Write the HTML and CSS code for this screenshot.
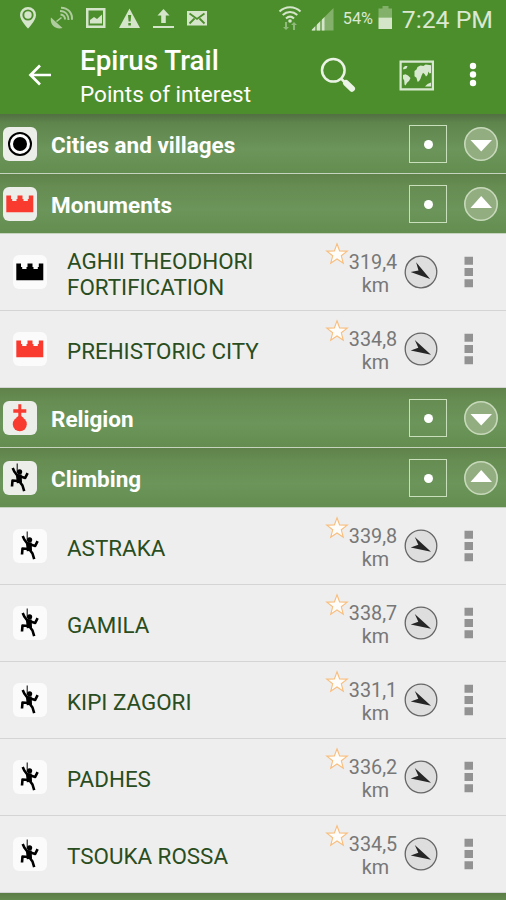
FILE: index.html
```html
<!DOCTYPE html>
<html lang="en">
<head>
  <meta charset="UTF-8">
  <title>Epirus Trail</title>
  <meta name="viewport" content="width=device-width, initial-scale=1.0">
  <link rel="stylesheet" href="styles.css">
</head>
<body>
  <svg class="defs">
    <symbol id="castle" viewBox="0 0 34 34">
      <path d="M3.300 8.500h4.700v3.500h1.200v2h4.300v-2h1V8.500h5V12h1v2h4.300v-2h1V8.500h4.500v16.700H3.300z"/>
    </symbol>
    <symbol id="climber" viewBox="0 0 34 34">
      <path class="rope" d="M14.200 2.500v9"/>
      <circle cx="16.600" cy="10.800" r="2.600"/>
      <path d="M12.800 12.800l5.900.7.300 8.200-5.200.5z"/>
      <path class="limb" d="M9.700 7l1.600 3.500 3.400 4.500M17.500 15.500l4.700 1.400 2.400-4.700M15.500 20l-6-.5-.5 6M16.500 20.500l3 4 1.700 5.700"/>
    </symbol>
    <symbol id="orb" viewBox="0 0 34 34">
      <path d="M15.300 3.300h3v5h5v3.400h-5v3.300l3 2.500h-9l3-2.500v-3.300h-5V8.300h5z"/>
      <circle cx="16.800" cy="23.200" r="7"/>
    </symbol>
    <symbol id="town" viewBox="0 0 34 34">
      <circle cx="17" cy="17" r="11" fill="#fff" stroke="#000" stroke-width="2"/>
      <circle cx="17" cy="17" r="7"/>
    </symbol>
    <symbol id="open" viewBox="0 0 36 36">
      <circle cx="18" cy="18" r="16.200" fill="#92ad80" stroke="#c7d9ba" stroke-width="1.600"/>
      <path d="M7.500 14h21.500L18.200 25.500z" fill="#fff"/>
    </symbol>
    <symbol id="close" viewBox="0 0 36 36">
      <circle cx="18" cy="18" r="16.200" fill="#92ad80" stroke="#c7d9ba" stroke-width="1.600"/>
      <path d="M7.500 22h21.500L18.200 10z" fill="#fff"/>
    </symbol>
    <symbol id="star" viewBox="0 0 24 24">
      <path d="M12 1.800l2.600 7.100 7.700.2-6 4.700 2 7.500-6.300-4.300-6.300 4.300 2-7.500-6-4.700 7.700-.2z" fill="#fffdfa" stroke="#f8bd7c" stroke-width="1.100"/>
    </symbol>
    <symbol id="compass" viewBox="0 0 34 34">
      <circle cx="17" cy="17" r="15.800" fill="#dedede" stroke="#666" stroke-width="1.300"/>
      <path d="M10.800 8L27 22.700 6.700 18.500l7.600-2.700z" fill="#262626"/>
    </symbol>
    <symbol id="more" viewBox="0 0 10 32">
      <path d="M.5.700h8.500v8H.5zM.5 12h8.500v8H.5zM.5 23.300h8.500v8H.5z" fill="#929292"/>
    </symbol>
  </svg>

  <header class="header">
    <div class="status">
      <svg class="notifications" viewBox="0 0 190 24">
        <path fill-rule="evenodd" d="M8 1a8 8 0 0 0-8 8c0 5.500 8 13.500 8 13.500S16 14.500 16 9a8 8 0 0 0-8-8zM8 3.400a5.600 5.600 0 1 1 0 11.200A5.600 5.600 0 0 1 8 3.400z"/>
        <circle cx="8" cy="9" r="3.700"/>
        <g opacity=".72">
          <path d="M31 11.500c-1.500 7 4.500 12.500 11.500 10.500zM37 16l5-4-1-1-5 4z"/>
          <path class="wave" d="M40.500 8.500c3 .2 4.700 2.500 4.500 5M40 5c5.500 0 8.500 4 8.500 9M41 1.700c7 0 11.500 5.300 11 12"/>
        </g>
        <path fill-rule="evenodd" d="M66 2h19.500v20H66zM68.500 4.500v15H83v-15z"/>
        <path d="M70 17.500v-3.500l4-3 3 2 5-4.500v9z"/>
        <path fill-rule="evenodd" d="M109.500 2.500L120 22H99zM108 9l.6 6.500h2l.6-6.500zM108.300 17v2.600h2.600V17z"/>
        <path d="M143.500 3l6 6.500h-3.700V17h-4.600V9.500h-3.700zM133 20h21v2h-21z"/>
        <path fill-rule="evenodd" d="M167 5h20v14.500h-20z"/>
        <path class="flap" d="M169.500 7.500l7.500 5.500 7.500-5.500M169.500 17.500l5-5M184.500 17.500l-5-5"/>
      </svg>
      <div class="indicators">
        <svg class="wifi" viewBox="0 0 24 26">
          <path class="wave" d="M1.500 6.500c6-5.700 15-5.700 21 0M4.700 10c4.300-4 10.300-4 14.600 0M8 13.500c2.500-2.300 5.500-2.300 8 0"/>
          <circle cx="12" cy="16" r="1.800"/>
          <path opacity=".5" d="M7 17h2v5h2l-3 3-3-3h2zM15 25v-5h-2l3-3 3 3h-2v5z"/>
        </svg>
        <svg class="signal" viewBox="0 0 24 24">
          <path opacity=".4" d="M22.500 1v22.500H0z"/>
          <path d="M1 22.500l3-3v4H1zM6 17.500l3-3v9H6zM11 12.500l2.500-2.500v13.500H11z"/>
        </svg>
        <span class="percent">54%</span>
        <svg class="battery" viewBox="0 0 15 23">
          <path opacity=".4" d="M4.500 0h6v2.500H14v9H.500v-9h4z"/>
          <path d="M.500 11.500H14V23H.500z"/>
        </svg>
        <span class="clock">7:24 PM</span>
      </div>
    </div>
    <div class="toolbar">
      <svg class="back" viewBox="0 0 24 22"><path d="M23 11H2.500M12 1.500L2.500 11l9.500 9.500"/></svg>
      <div class="titles">
        <h1>Epirus Trail</h1>
        <p>Points of interest</p>
      </div>
      <svg class="search" viewBox="0 0 36 36">
        <circle cx="13.300" cy="13.300" r="11.300"/>
        <path d="M21 21.500l4 4"/>
        <path class="handle" d="M26 26l6 5.700"/>
      </svg>
      <svg class="map" viewBox="0 0 36 31">
        <path fill-rule="evenodd" d="M.500.500h34.500v30H.500zM2.700 2.700v25.600h30.100V2.700z"/>
        <path d="M4 8l2-2 2.500 0-1 2.500-3 1zM4 15l2.500-.7 2.500 1.200 2.500 2.500-1.500 3-2 1.700-1.500 2.800-1-1-.3-4-1.200-2zM15.500 11l2-1.500 1-2.500 3-1.500 3 .5 2-1.500 5.500.7V13l-1.500.5-1-2-1 3.500-1.500 1.500-1.500-2.500-1.500-1.200-1.500 3-1 3-1.500 2.500-1.500.5-1-4-2-1.500zM26 26.500l2.500-2.500 3.500-1.500v4z"/>
      </svg>
      <svg class="menu" viewBox="0 0 8 26"><circle cx="4" cy="4" r="3.200"/><circle cx="4" cy="12.500" r="3.200"/><circle cx="4" cy="21" r="3.200"/></svg>
    </div>
  </header>

  <main>
    <section class="group first">
      <svg class="badge"><use href="#town"/></svg>
      <h2>Cities and villages</h2>
      <span class="check"></span>
      <svg class="toggle"><use href="#open"/></svg>
    </section>
    <section class="group">
      <svg class="badge red"><use href="#castle"/></svg>
      <h2>Monuments</h2>
      <span class="check"></span>
      <svg class="toggle"><use href="#close"/></svg>
    </section>
    <div class="row">
      <svg class="badge"><use href="#castle"/></svg>
      <h3>AGHII THEODHORI FORTIFICATION</h3>
      <div class="distance"><svg class="star"><use href="#star"/></svg>319,4 <span>km</span></div>
      <svg class="compass turned"><use href="#compass"/></svg>
      <svg class="more"><use href="#more"/></svg>
    </div>
    <div class="row">
      <svg class="badge red"><use href="#castle"/></svg>
      <h3>PREHISTORIC CITY</h3>
      <div class="distance"><svg class="star"><use href="#star"/></svg>334,8 <span>km</span></div>
      <svg class="compass"><use href="#compass"/></svg>
      <svg class="more"><use href="#more"/></svg>
    </div>
    <section class="group">
      <svg class="badge red"><use href="#orb"/></svg>
      <h2>Religion</h2>
      <span class="check"></span>
      <svg class="toggle"><use href="#open"/></svg>
    </section>
    <section class="group">
      <svg class="badge"><use href="#climber"/></svg>
      <h2>Climbing</h2>
      <span class="check"></span>
      <svg class="toggle"><use href="#close"/></svg>
    </section>
    <div class="row">
      <svg class="badge"><use href="#climber"/></svg>
      <h3>ASTRAKA</h3>
      <div class="distance"><svg class="star"><use href="#star"/></svg>339,8 <span>km</span></div>
      <svg class="compass"><use href="#compass"/></svg>
      <svg class="more"><use href="#more"/></svg>
    </div>
    <div class="row">
      <svg class="badge"><use href="#climber"/></svg>
      <h3>GAMILA</h3>
      <div class="distance"><svg class="star"><use href="#star"/></svg>338,7 <span>km</span></div>
      <svg class="compass"><use href="#compass"/></svg>
      <svg class="more"><use href="#more"/></svg>
    </div>
    <div class="row">
      <svg class="badge"><use href="#climber"/></svg>
      <h3>KIPI ZAGORI</h3>
      <div class="distance"><svg class="star"><use href="#star"/></svg>331,1 <span>km</span></div>
      <svg class="compass"><use href="#compass"/></svg>
      <svg class="more"><use href="#more"/></svg>
    </div>
    <div class="row">
      <svg class="badge"><use href="#climber"/></svg>
      <h3>PADHES</h3>
      <div class="distance"><svg class="star"><use href="#star"/></svg>336,2 <span>km</span></div>
      <svg class="compass"><use href="#compass"/></svg>
      <svg class="more"><use href="#more"/></svg>
    </div>
    <div class="row">
      <svg class="badge"><use href="#climber"/></svg>
      <h3>TSOUKA ROSSA</h3>
      <div class="distance"><svg class="star"><use href="#star"/></svg>334,5 <span>km</span></div>
      <svg class="compass"><use href="#compass"/></svg>
      <svg class="more"><use href="#more"/></svg>
    </div>
    <section class="group next"></section>
  </main>
</body>
</html>
```

FILE: styles.css
```css
* {
  box-sizing: border-box;
}
body {
  margin: 0;
  height: 900px;
  overflow: hidden;
  font-family: Roboto, "Liberation Sans", sans-serif;
  background: #eee;
}
h1, h2, h3, p {
  margin: 0;
}
svg {
  flex: none;
}
.defs {
  display: none;
}
.header {
  height: 114px;
  background: #4d8e2c;
  color: #fff;
}
.status {
  display: flex;
  justify-content: space-between;
  height: 36px;
  padding: 6px 13px 0 20px;
  color: #dbe8d2;
  fill: #d4e5ca;
}
.notifications {
  width: 190px;
  height: 24px;
}
.wave {
  fill: none;
  stroke: #d4e5ca;
  stroke-width: 2;
}
.flap {
  fill: none;
  stroke: #4d8e2c;
  stroke-width: 1.8;
}
.indicators {
  display: flex;
}
.wifi {
  width: 24px;
  height: 26px;
  margin-top: -1px;
}
.signal {
  width: 24px;
  height: 24px;
  margin: 1px 8px 0 9px;
}
.percent {
  width: 35px;
  font-size: 16.300px;
  line-height: 26px;
}
.battery {
  width: 15px;
  height: 23px;
}
.clock {
  margin-left: 9px;
  font-size: 24.800px;
  line-height: 27px;
  white-space: nowrap;
}
.toolbar {
  display: flex;
  align-items: center;
  height: 78px;
  padding: 0 28px;
}
.back {
  width: 24px;
  height: 22px;
  fill: none;
  stroke: #fff;
  stroke-width: 2.7;
}
.titles {
  width: 240px;
  margin: 4px 0 0 28px;
}
.titles h1 {
  font-size: 27.800px;
  line-height: 34px;
  font-weight: 500;
}
.titles p {
  font-size: 22.500px;
  line-height: 32px;
}
.search {
  width: 36px;
  height: 36px;
  fill: none;
  stroke: #eaf3e5;
  stroke-width: 2.5;
}
.handle {
  stroke-width: 6;
  stroke-linecap: round;
}
.map {
  width: 36px;
  height: 31px;
  margin-left: 43px;
  fill: #d9e9d1;
}
.menu {
  width: 8px;
  height: 26px;
  margin-left: 34px;
  fill: #fff;
}
.group {
  display: flex;
  align-items: center;
  height: 60px;
  padding: 1px 7px 0 3px;
  color: #fff;
  background: linear-gradient(#5f824a, #668c52 20%, #6b955a 60%, #648d50);
  border-bottom: 1px solid #c6d3bf;
}
.group.first {
  background: linear-gradient(#526f42, #5f854c 15%, #6b955a 60%, #648d50);
}
.group.next {
  height: 7px;
  border-bottom: none;
  background: linear-gradient(#5a7c45, #648a50);
}
.group h2 {
  flex: 1;
  margin: 1px 0 0 14px;
  font-size: 22.500px;
  font-weight: 700;
}
.badge {
  width: 34px;
  height: 34px;
  border-radius: 6px;
  background: #eceee9;
  fill: #000;
}
.badge.red {
  fill: #f93a2f;
}
.limb, .rope {
  fill: none;
  stroke: #000;
  stroke-width: 2.6;
  stroke-linejoin: round;
}
.rope {
  stroke-width: 1;
}
.check {
  display: flex;
  align-items: center;
  justify-content: center;
  width: 38px;
  height: 38px;
  margin-right: 16px;
  border: 1.500px solid #c9dfbb;
}
.check::after {
  content: "";
  width: 9px;
  height: 9px;
  border-radius: 50%;
  background: #fff;
}
.toggle {
  width: 36px;
  height: 36px;
}
.row {
  display: flex;
  align-items: center;
  height: 77px;
  padding: 0 32px 0 13px;
  background: #eee;
  border-bottom: 1px solid #d4d4d4;
}
.row .badge {
  background: #fbfbfb;
}
.row h3 {
  width: 281px;
  padding: 3px 60px 0 0;
  margin-left: 20px;
  font-size: 22.400px;
  line-height: 26px;
  font-weight: 400;
  color: #294d20;
}
.distance {
  position: relative;
  width: 50px;
  padding-top: 3px;
  font-size: 19.800px;
  line-height: 23px;
  text-align: center;
  color: #777;
}
.distance span {
  display: block;
  padding-left: 5px;
}
.star {
  position: absolute;
  left: -23px;
  top: -6px;
  width: 24px;
  height: 24px;
}
.compass {
  width: 34px;
  height: 34px;
  margin-left: 6px;
}
.compass.turned {
  transform: rotate(8deg);
}
.more {
  width: 10px;
  height: 32px;
  margin-left: auto;
}
```
